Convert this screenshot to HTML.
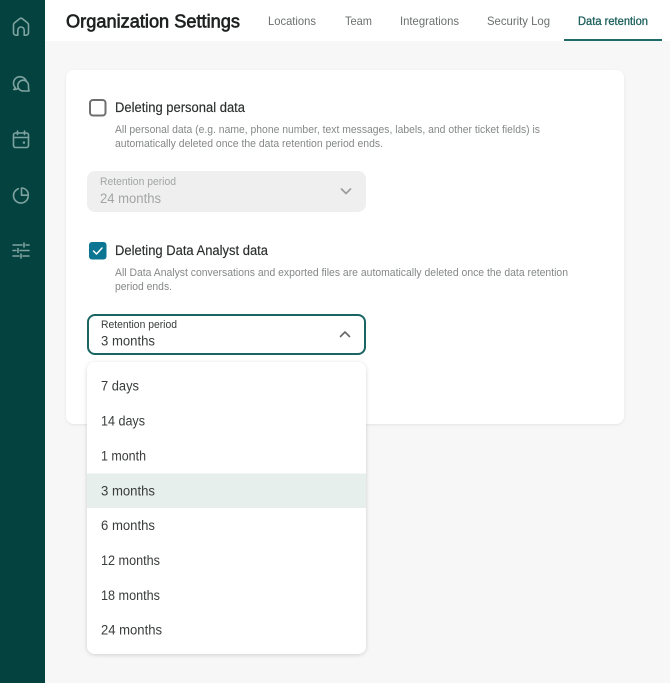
<!DOCTYPE html>
<html><head><meta charset="utf-8"><style>
html,body{margin:0;padding:0;background:#f7f7f7;width:670px;height:683px;overflow:hidden}
svg{display:block}
text{font-family:"Liberation Sans",sans-serif}
.t{font-size:12px;fill:#6b6f6f}
.d{font-size:11px;fill:#858888}
.l{font-size:13.5px;fill:#2b2d2d;stroke:#2b2d2d;stroke-width:.15px}
.i{font-size:13.5px;fill:#3a3c3c}
</style></head><body>
<svg width="670" height="683" viewBox="0 0 670 683" xmlns="http://www.w3.org/2000/svg">
<defs>
<filter id="s" x="-5%" y="-5%" width="110%" height="110%"><feDropShadow dx="0" dy="1" stdDeviation="2" flood-color="#000" flood-opacity=".16"/></filter>
<filter id="c" x="-5%" y="-5%" width="110%" height="110%"><feDropShadow dx="0" dy="1" stdDeviation="1.2" flood-color="#000" flood-opacity=".08"/></filter>
</defs>
<rect width="670" height="683" fill="#f7f7f7"/>
<rect x="45" width="625" height="41" fill="#fff"/>
<rect width="45" height="683" fill="#03423f"/>
<g fill="none" stroke="#7fa3a0" stroke-width="1.6" stroke-linecap="round" stroke-linejoin="round">
<path d="M13.500 25v7.700a2.500 2.500 0 0 0 2.500 2.500h1.800v-5a3.200 3.200 0 0 1 6.400 0v5H26a2.500 2.500 0 0 0 2.500-2.500V25a3 3 0 0 0-1.100-2.300l-5-4a2.300 2.300 0 0 0-2.800 0l-5 4a3 3 0 0 0-1.100 2.300z"/>
<path d="M26 80.500a7 7 0 0 0-6-3.800 6.500 6.500 0 0 0-6.500 6.500c0 1.800.7 3.400 1.900 4.600-.2.700-.7 1.200-1.600 1.600 1.300.2 2.600 0 3.700-.6"/>
<path d="M23.200 80.200a5.400 5.400 0 1 0 0 10.800h5.800v-.7c-.5-.7-.5-1.500-.5-2.300v-2.400a5.400 5.400 0 0 0-5.300-5.400z"/>
<rect x="13.500" y="133" width="15" height="14.500" rx="2"/>
<path d="M13.500 137.500h15M17.500 131v3.500M24.500 131v3.500"/>
<path d="M18.300 188.700A7.400 7.400 0 1 0 28.200 196.700"/>
<path d="M21.500 188a6.800 6.800 0 0 1 6.800 7.200h-6.800z"/>
<path d="M13 245h9M26 245h3M24 243v4M13 250.500h3M20 250.500h9M18 248.500v4M13 256h6M23 256h6M21 254v4"/>
</g>
<rect x="22.800" y="141.500" width="2.200" height="2.200" fill="#7fa3a0"/>

<text x="66" y="27.500" font-size="18.500" fill="#1e2020" stroke="#1e2020" stroke-width=".65" textLength="174" lengthAdjust="spacingAndGlyphs">Organization Settings</text>
<text class="t" x="268" y="25" textLength="48" lengthAdjust="spacingAndGlyphs">Locations</text>
<text class="t" x="345" y="25" textLength="27" lengthAdjust="spacingAndGlyphs">Team</text>
<text class="t" x="400" y="25" textLength="59" lengthAdjust="spacingAndGlyphs">Integrations</text>
<text class="t" x="487" y="25" textLength="63" lengthAdjust="spacingAndGlyphs">Security Log</text>
<text class="t" x="578" y="25" textLength="70" lengthAdjust="spacingAndGlyphs" style="fill:#1a5e5b;stroke:#1a5e5b;stroke-width:.3px">Data retention</text>
<rect x="564" y="39" width="98" height="2" fill="#1f6b68"/>

<rect x="66" y="70" width="558" height="354" rx="8" fill="#fff" filter="url(#c)"/>

<rect x="90" y="100" width="15.500" height="15.500" rx="3" fill="#fff" stroke="#6f6f6f" stroke-width="2"/>
<text class="l" x="115" y="112" textLength="130" lengthAdjust="spacingAndGlyphs">Deleting personal data</text>
<text class="d" x="115" y="133" textLength="425" lengthAdjust="spacingAndGlyphs">All personal data (e.g. name, phone number, text messages, labels, and other ticket fields) is</text>
<text class="d" x="115" y="147" textLength="268" lengthAdjust="spacingAndGlyphs">automatically deleted once the data retention period ends.</text>

<rect x="87" y="171" width="279" height="41" rx="8" fill="#efefef"/>
<text x="100" y="185" font-size="11" fill="#a3a5a5" textLength="76" lengthAdjust="spacingAndGlyphs">Retention period</text>
<text x="100" y="203" font-size="13.500" fill="#a3a5a5" textLength="61" lengthAdjust="spacingAndGlyphs">24 months</text>
<path d="M341.500 189l4.500 4.500 4.500-4.500" fill="none" stroke="#9a9c9c" stroke-width="1.700" stroke-linecap="round" stroke-linejoin="round"/>

<rect x="89" y="242" width="17.500" height="17.500" rx="3" fill="#0b7592"/>
<path d="M93.500 251l3 3 5.500-6" fill="none" stroke="#fff" stroke-width="1.500" stroke-linecap="round" stroke-linejoin="round"/>
<text class="l" x="115" y="255" textLength="153" lengthAdjust="spacingAndGlyphs">Deleting Data Analyst data</text>
<text class="d" x="115" y="276" textLength="453" lengthAdjust="spacingAndGlyphs">All Data Analyst conversations and exported files are automatically deleted once the data retention</text>
<text class="d" x="115" y="290" textLength="57" lengthAdjust="spacingAndGlyphs">period ends.</text>

<rect x="88" y="315" width="277" height="39" rx="7" fill="#fff" stroke="#1a6562" stroke-width="2"/>
<text x="101" y="328" font-size="11" fill="#3a3c3c" textLength="76" lengthAdjust="spacingAndGlyphs">Retention period</text>
<text class="i" x="101" y="345.500" textLength="54" lengthAdjust="spacingAndGlyphs">3 months</text>
<path d="M340.500 336.500l4.500-4.500 4.500 4.500" fill="none" stroke="#666" stroke-width="1.600" stroke-linecap="round" stroke-linejoin="round"/>

<rect x="87" y="362" width="279" height="292" rx="8" fill="#fff" filter="url(#s)"/>
<rect x="87" y="473.500" width="279" height="34.500" fill="#e6efeb"/>
<text class="i" x="101" y="390.500" textLength="38" lengthAdjust="spacingAndGlyphs">7 days</text>
<text class="i" x="101" y="425.500" textLength="44" lengthAdjust="spacingAndGlyphs">14 days</text>
<text class="i" x="101" y="460.500" textLength="45" lengthAdjust="spacingAndGlyphs">1 month</text>
<text class="i" x="101" y="495.500" textLength="54" lengthAdjust="spacingAndGlyphs">3 months</text>
<text class="i" x="101" y="530" textLength="54" lengthAdjust="spacingAndGlyphs">6 months</text>
<text class="i" x="101" y="565" textLength="59" lengthAdjust="spacingAndGlyphs">12 months</text>
<text class="i" x="101" y="600" textLength="59" lengthAdjust="spacingAndGlyphs">18 months</text>
<text class="i" x="101" y="634.500" textLength="61" lengthAdjust="spacingAndGlyphs">24 months</text>
</svg>
</body></html>
